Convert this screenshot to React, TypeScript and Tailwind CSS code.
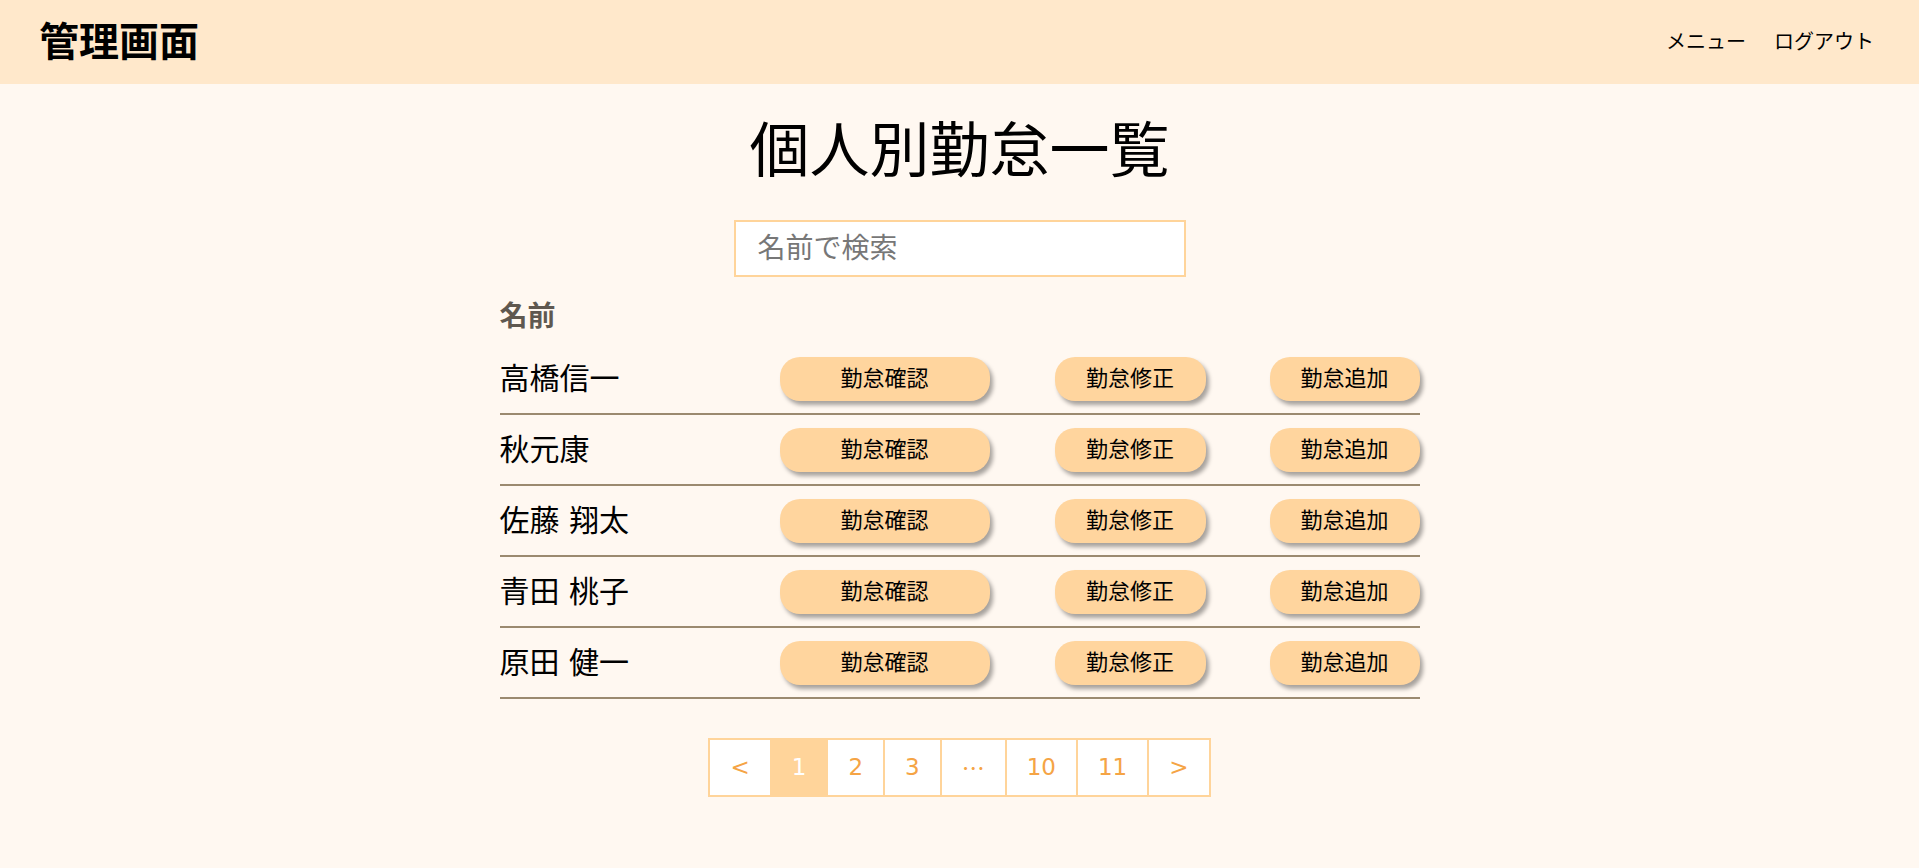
import React from "react";

const staff = ["高橋信一", "秋元康", "佐藤 翔太", "青田 桃子", "原田 健一"];
const pages = ["<", "1", "2", "3", "…", "10", "11", ">"];

const btn =
  "h-[44px] rounded-[20px] bg-[#ffd59e] text-[22px] leading-none text-black shadow-[3px_4px_4px_rgba(0,0,0,0.35)]";

export default function App() {
  return (
    <div className="min-h-screen bg-[#fff8f1] font-['DejaVu_Sans','Noto_Sans_CJK_JP',sans-serif] text-black">
      <header className="flex h-[84px] items-center justify-between bg-[#ffe8cb] pl-[39px] pr-[45px]">
        <h1 className="text-[40px] font-bold leading-none">管理画面</h1>
        <nav className="flex gap-[28px] text-[20px] leading-none">
          <a href="#">メニュー</a>
          <a href="#">ログアウト</a>
        </nav>
      </header>

      <main className="flex flex-col items-center pb-10">
        <h2 className="mt-[37px] text-[60px] leading-[60px]">個人別勤怠一覧</h2>
        <input
          placeholder="名前で検索"
          className="mt-[39px] h-[57px] w-[452px] border-2 border-[#ffd49a] bg-white px-[22px] text-[28px] outline-none placeholder:text-[#777]"
        />

        <div className="mt-[26px] w-[920px]">
          <div className="h-[41px] text-[28px] font-bold leading-[28px] text-[#5f5850]">
            名前
          </div>
          {staff.map((name) => (
            <div
              key={name}
              className="flex items-center border-b-2 border-[#9b8a70] pt-[13px] pb-[12px]"
            >
              <span className="w-[280px] text-[30px] leading-none">{name}</span>
              <button type="button" className={`${btn} w-[210px]`}>
                勤怠確認
              </button>
              <button type="button" className={`${btn} ml-[65px] w-[151px]`}>
                勤怠修正
              </button>
              <button type="button" className={`${btn} ml-[64px] w-[150px]`}>
                勤怠追加
              </button>
            </div>
          ))}
        </div>

        <div className="mt-[39px] flex border-2 border-[#ffd49a]">
          {pages.map((p, i) => (
            <span
              key={p}
              className={`flex h-[55px] items-center px-[20px] text-[23px] ${
                i > 0 ? "border-l-2 border-[#ffd49a]" : ""
              } ${p === "1" ? "bg-[#ffd49a] text-white" : "bg-white text-[#f5a445]"} ${
                p === "…" ? "font-['Noto_Sans_CJK_JP',sans-serif]" : ""
              }`}
            >
              {p}
            </span>
          ))}
        </div>
      </main>
    </div>
  );
}
